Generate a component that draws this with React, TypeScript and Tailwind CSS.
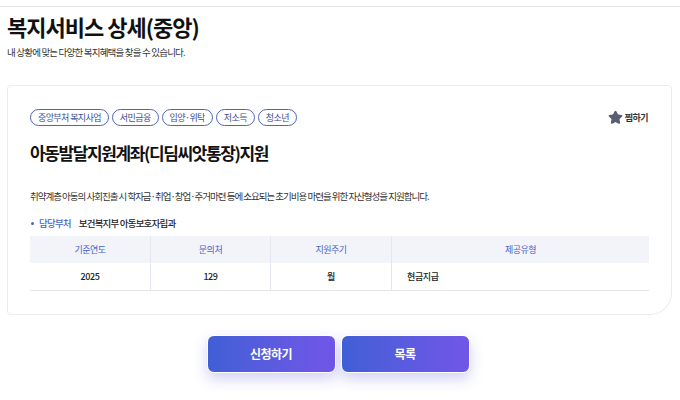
import { Star } from "lucide-react";

const tags = ["중앙부처 복지사업", "서민금융", "입양·위탁", "저소득", "청소년"];

const columns = [
  { head: "기준연도", value: "2025", w: "w-[120px]", center: true },
  { head: "문의처", value: "129", w: "w-[120px]", center: true },
  { head: "지원주기", value: "월", w: "w-[121px]", center: true },
  { head: "제공유형", value: "현금지급", w: "flex-1", center: false },
];

const btn =
  "w-[129px] h-[38px] rounded-[7px] border border-white bg-gradient-to-r from-[#3f5fd6] to-[#7156e8] text-white text-[12px] font-bold tracking-[-0.5px] shadow-[0_6px_14px_rgba(90,90,220,0.28)]";

const App = () => {
  return (
    <div className="w-[680px] h-[400px] bg-white overflow-hidden font-['Noto_Sans_CJK_KR','Noto_Sans',sans-serif] text-[#111]">
      <div className="h-[6px]" />
      <div className="border-t border-[#e5e5e5] px-[7px]">
        <h1 className="mt-[3px] text-[22px] leading-[32px] font-bold tracking-[-1px]">
          복지서비스 상세(중앙)
        </h1>
        <p className="mt-[3px] text-[9.5px] leading-[14px] text-[#333] tracking-[-0.8px]">
          내 상황에 맞는 다양한 복지혜택을 찾을 수 있습니다.
        </p>

        <div className="mt-[26px] mr-[1px] h-[230px] border border-[#ebebeb] rounded-tl-[4px] rounded-tr-[4px] rounded-bl-[4px] rounded-br-[22px] px-[22px] pt-[23px]">
          <div className="flex items-center justify-between">
            <div className="flex gap-[3px]">
              {tags.map((t) => (
                <span
                  key={t}
                  className="h-[17px] px-[7px] flex items-center rounded-full border border-[#5066b0] text-[9px] text-[#3a4d94] tracking-[-0.6px]"
                >
                  {t}
                </span>
              ))}
            </div>
            <div className="flex items-center gap-[2px] mr-[1px]">
              <Star size={15} fill="#5a5e73" stroke="#5a5e73" />
              <span className="text-[9px] font-bold text-[#333] tracking-[-0.5px]">찜하기</span>
            </div>
          </div>

          <h2 className="mt-[15px] text-[17px] leading-[24px] font-bold tracking-[-1.4px]">
            아동발달지원계좌(디딤씨앗통장)지원
          </h2>

          <p className="mt-[24px] text-[9.5px] leading-[14px] text-[#333] tracking-[-1px]">
            취약계층 아동의 사회진출 시 학자금·취업·창업·주거마련 등에 소요되는 초기비용 마련을 위한 자산형성을 지원합니다.
          </p>

          <div className="mt-[13px] flex items-center text-[9.5px] leading-[14px] tracking-[-0.8px]">
            <span className="w-[3px] h-[3px] rounded-full bg-[#4a63c9] ml-[1px] mr-[5px]" />
            <span className="text-[#4a63c9] font-medium">담당부처</span>
            <span className="ml-[8px] font-medium text-[#222]">보건복지부 아동보호자립과</span>
          </div>

          <div className="mt-[6px] flex">
            {columns.map((c, i) => (
              <div key={c.head} className={`${c.w} ${i > 0 ? "border-l border-[#e4e7ef]" : ""}`}>
                <div className="h-[27px] bg-[#f2f4f9] flex items-center justify-center text-[9px] text-[#4a63c9] tracking-[-0.5px]">
                  {c.head}
                </div>
                <div
                  className={`h-[28px] border-b border-[#e6e6e6] flex items-center text-[9px] font-medium text-[#222] tracking-[-0.4px] ${
                    c.center ? "justify-center" : "pl-[15px]"
                  }`}
                >
                  {c.value}
                </div>
              </div>
            ))}
          </div>
        </div>

        <div className="mt-[20px] flex justify-center gap-[5px] ml-[-4px]">
          <button className={btn}>신청하기</button>
          <button className={btn}>목록</button>
        </div>
      </div>
    </div>
  );
};

export default App;
